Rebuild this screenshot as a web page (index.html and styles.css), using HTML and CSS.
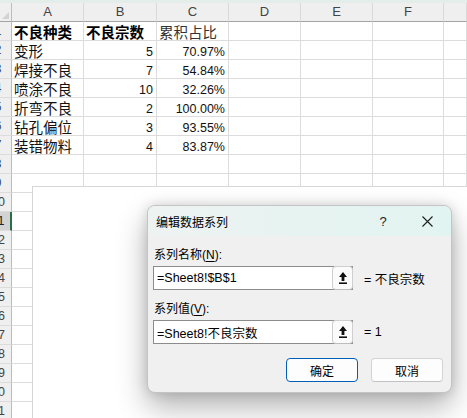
FILE: index.html
```html
<!DOCTYPE html>
<html>
<head>
  <meta charset="utf-8">
  <title>不良统计</title>
  <link rel="stylesheet" href="styles.css">
</head>
<body>
  <div class="ribbon-edge"></div>

  <div class="sheet" id="sheet">
    <div class="row col-head">
      <div class="corner"></div>
      <div class="cell">A</div>
      <div class="cell">B</div>
      <div class="cell">C</div>
      <div class="cell">D</div>
      <div class="cell">E</div>
      <div class="cell">F</div>
      <div class="cell"></div>
    </div>
    <div class="row">
      <div class="rh"><span>1</span></div>
      <div class="cell bold">不良种类</div>
      <div class="cell bold">不良宗数</div>
      <div class="cell soft">累积占比</div>
      <div class="cell"></div><div class="cell"></div><div class="cell"></div><div class="cell"></div>
    </div>
    <div class="row">
      <div class="rh"><span>2</span></div>
      <div class="cell">变形</div>
      <div class="cell num">5</div>
      <div class="cell num">70.97%</div>
      <div class="cell"></div><div class="cell"></div><div class="cell"></div><div class="cell"></div>
    </div>
    <div class="row">
      <div class="rh"><span>3</span></div>
      <div class="cell">焊接不良</div>
      <div class="cell num">7</div>
      <div class="cell num">54.84%</div>
      <div class="cell"></div><div class="cell"></div><div class="cell"></div><div class="cell"></div>
    </div>
    <div class="row">
      <div class="rh"><span>4</span></div>
      <div class="cell">喷涂不良</div>
      <div class="cell num">10</div>
      <div class="cell num">32.26%</div>
      <div class="cell"></div><div class="cell"></div><div class="cell"></div><div class="cell"></div>
    </div>
    <div class="row">
      <div class="rh"><span>5</span></div>
      <div class="cell">折弯不良</div>
      <div class="cell num">2</div>
      <div class="cell num">100.00%</div>
      <div class="cell"></div><div class="cell"></div><div class="cell"></div><div class="cell"></div>
    </div>
    <div class="row">
      <div class="rh"><span>6</span></div>
      <div class="cell">钻孔偏位</div>
      <div class="cell num">3</div>
      <div class="cell num">93.55%</div>
      <div class="cell"></div><div class="cell"></div><div class="cell"></div><div class="cell"></div>
    </div>
    <div class="row">
      <div class="rh"><span>7</span></div>
      <div class="cell">装错物料</div>
      <div class="cell num">4</div>
      <div class="cell num">83.87%</div>
      <div class="cell"></div><div class="cell"></div><div class="cell"></div><div class="cell"></div>
    </div>
  </div>

  <div class="chart"></div>

  <div class="dialog">
    <div class="dialog-title">
      <span class="dialog-caption">编辑数据系列</span>
      <span class="title-btn">?</span>
      <span class="title-btn">
        <svg width="11" height="11" viewBox="0 0 11 11"><path d="M0.5 0.5 L10.5 10.5 M10.5 0.5 L0.5 10.5" stroke="#1f1f1f" stroke-width="1.1" fill="none"/></svg>
      </span>
    </div>
    <div class="dialog-body">
      <div class="field-label">系列名称(<u>N</u>):</div>
      <div class="field-row">
        <div class="ref-input">
          <span class="ref-text">=Sheet8!$B$1</span>
          <span class="collapse-btn">
            <svg width="8" height="12" viewBox="0 0 8 12"><path d="M4 0 L8 5 L5.4 5 L5.4 9 L2.6 9 L2.6 5 L0 5 Z" fill="#111"/><rect x="0" y="10.4" width="8" height="1.6" fill="#111"/></svg>
          </span>
        </div>
        <span class="ref-value">= 不良宗数</span>
      </div>

      <div class="field-label second">系列值(<u>V</u>):</div>
      <div class="field-row">
        <div class="ref-input">
          <span class="ref-text">=Sheet8!不良宗数</span>
          <span class="collapse-btn">
            <svg width="8" height="12" viewBox="0 0 8 12"><path d="M4 0 L8 5 L5.4 5 L5.4 9 L2.6 9 L2.6 5 L0 5 Z" fill="#111"/><rect x="0" y="10.4" width="8" height="1.6" fill="#111"/></svg>
          </span>
        </div>
        <span class="ref-value">= 1</span>
      </div>

      <div class="dialog-buttons">
        <div class="btn primary">确定</div>
        <div class="btn">取消</div>
      </div>
    </div>
  </div>

  <script>
    // Fill the rest of the visible grid with empty rows
    const sheet = document.getElementById('sheet');
    for (let r = 8; r <= 21; r++) {
      const row = document.createElement('div');
      row.className = 'row';
      const head = document.createElement('div');
      head.className = r === 11 ? 'rh sel' : 'rh';
      head.innerHTML = '<span>' + r + '</span>';
      row.appendChild(head);
      for (let c = 0; c < 7; c++) {
        const cell = document.createElement('div');
        cell.className = 'cell';
        row.appendChild(cell);
      }
      sheet.appendChild(row);
    }
  </script>
</body>
</html>
```

FILE: styles.css
```css
* {
  box-sizing: border-box;
}

body {
  margin: 0;
  width: 467px;
  height: 418px;
  overflow: hidden;
  position: relative;
  background-color: #fff;
  color: #000;
  font-family: "Liberation Sans", "Noto Sans CJK SC", sans-serif;
}

.ribbon-edge {
  height: 3px;
  background-color: #e3eeeb;
}

/* worksheet grid */
.row {
  display: grid;
  grid-template-columns: 12px 72px 73px 72px 72px 72px 71px 1fr;
  height: 19px;
}

.cell {
  display: flex;
  align-items: flex-end;
  padding: 0 3px 0 2px;
  border-right: 1px solid #dcdcdc;
  border-bottom: 1px solid #dcdcdc;
  font-size: 14.5px;
  line-height: 14px;
  white-space: nowrap;
  overflow: hidden;
  color: #111;
}

.cell.num {
  justify-content: flex-end;
  font-size: 12.5px;
}

.cell.bold {
  font-weight: bold;
  color: #000;
}

.cell.soft {
  color: #333;
}

.col-head .cell {
  justify-content: center;
  align-items: center;
  padding: 0;
  background-color: #efefef;
  border-right-color: #d9d9d9;
  border-bottom-color: #a3a3a3;
  font-size: 13px;
  line-height: 18px;
  color: #444;
}

.corner {
  position: relative;
  background-color: #efefef;
  border-right: 1px solid #bdbdbd;
  border-bottom: 1px solid #a3a3a3;
}

.corner::after {
  content: "";
  position: absolute;
  right: 2px;
  bottom: 2px;
  border-left: 7px solid transparent;
  border-bottom: 7px solid #d2d2d2;
}

/* row numbers sit in a wider box, only its right edge shows */
.rh {
  overflow: hidden;
  background-color: #efefef;
  border-right: 1px solid #bdbdbd;
  border-bottom: 1px solid #dcdcdc;
  font-size: 12.5px;
  color: #444;
}

.rh span {
  display: block;
  width: 24px;
  margin-left: -14px;
  text-align: center;
  line-height: 18px;
}

.rh.sel {
  background-color: #d3d3d3;
  border-right: 2px solid #217346;
  color: #222;
}

/* embedded chart area */
.chart {
  position: absolute;
  left: 32px;
  top: 186px;
  right: -2px;
  bottom: -2px;
  background-color: #fff;
  border: 1px solid #d6d6d6;
}

/* dialog */
.dialog {
  position: absolute;
  left: 147px;
  top: 205px;
  width: 305px;
  height: 188px;
  border: 1px solid #c4c4c4;
  border-radius: 8px;
  background-color: #f0f0f0;
  overflow: hidden;
  font-size: 12px;
  box-shadow: 0 14px 30px rgba(0, 0, 0, 0.3), 0 0 12px rgba(0, 0, 0, 0.14);
}

.dialog-title {
  display: flex;
  align-items: center;
  height: 30px;
  padding: 0 2px 0 8px;
  background: linear-gradient(90deg, #eef3f2 0%, #e6f3f1 55%, #e2f4f1 100%);
}

.dialog-caption {
  flex: 1;
}

.title-btn {
  width: 44px;
  display: flex;
  justify-content: center;
  align-items: center;
  font-size: 13px;
  color: #1f1f1f;
}

.dialog-body {
  padding: 11px 8px 0 5px;
}

.field-label {
  line-height: 16px;
  margin: 0 0 3px 1px;
}

.field-label.second {
  margin-top: 11px;
}

.field-label u {
  text-underline-offset: 2px;
}

.field-row {
  display: flex;
  align-items: center;
}

.ref-input {
  display: flex;
  align-items: center;
  width: 200px;
  height: 24px;
  background-color: #fff;
  border: 1px solid #8c8c8c;
  font-size: 12.5px;
}

.ref-text {
  padding-left: 3px;
}

.collapse-btn {
  display: flex;
  align-items: center;
  justify-content: center;
  align-self: stretch;
  width: 21px;
  margin: -1px -1px -1px auto;
  background-color: #fbfbfb;
  border: 1px solid #cfcfcf;
  border-bottom-color: #bdbdbd;
  border-radius: 4px;
}

.ref-value {
  margin-left: 11px;
  font-size: 12.5px;
}

.dialog-buttons {
  display: flex;
  justify-content: flex-end;
  gap: 13px;
  margin-top: 14px;
}

.btn {
  width: 72px;
  height: 24px;
  display: flex;
  align-items: center;
  justify-content: center;
  background-color: #fdfdfd;
  border: 1px solid #d3d3d3;
  border-bottom-color: #c2c2c2;
  border-radius: 4px;
}

.btn.primary {
  border: 1px solid #005fb8;
}
```
